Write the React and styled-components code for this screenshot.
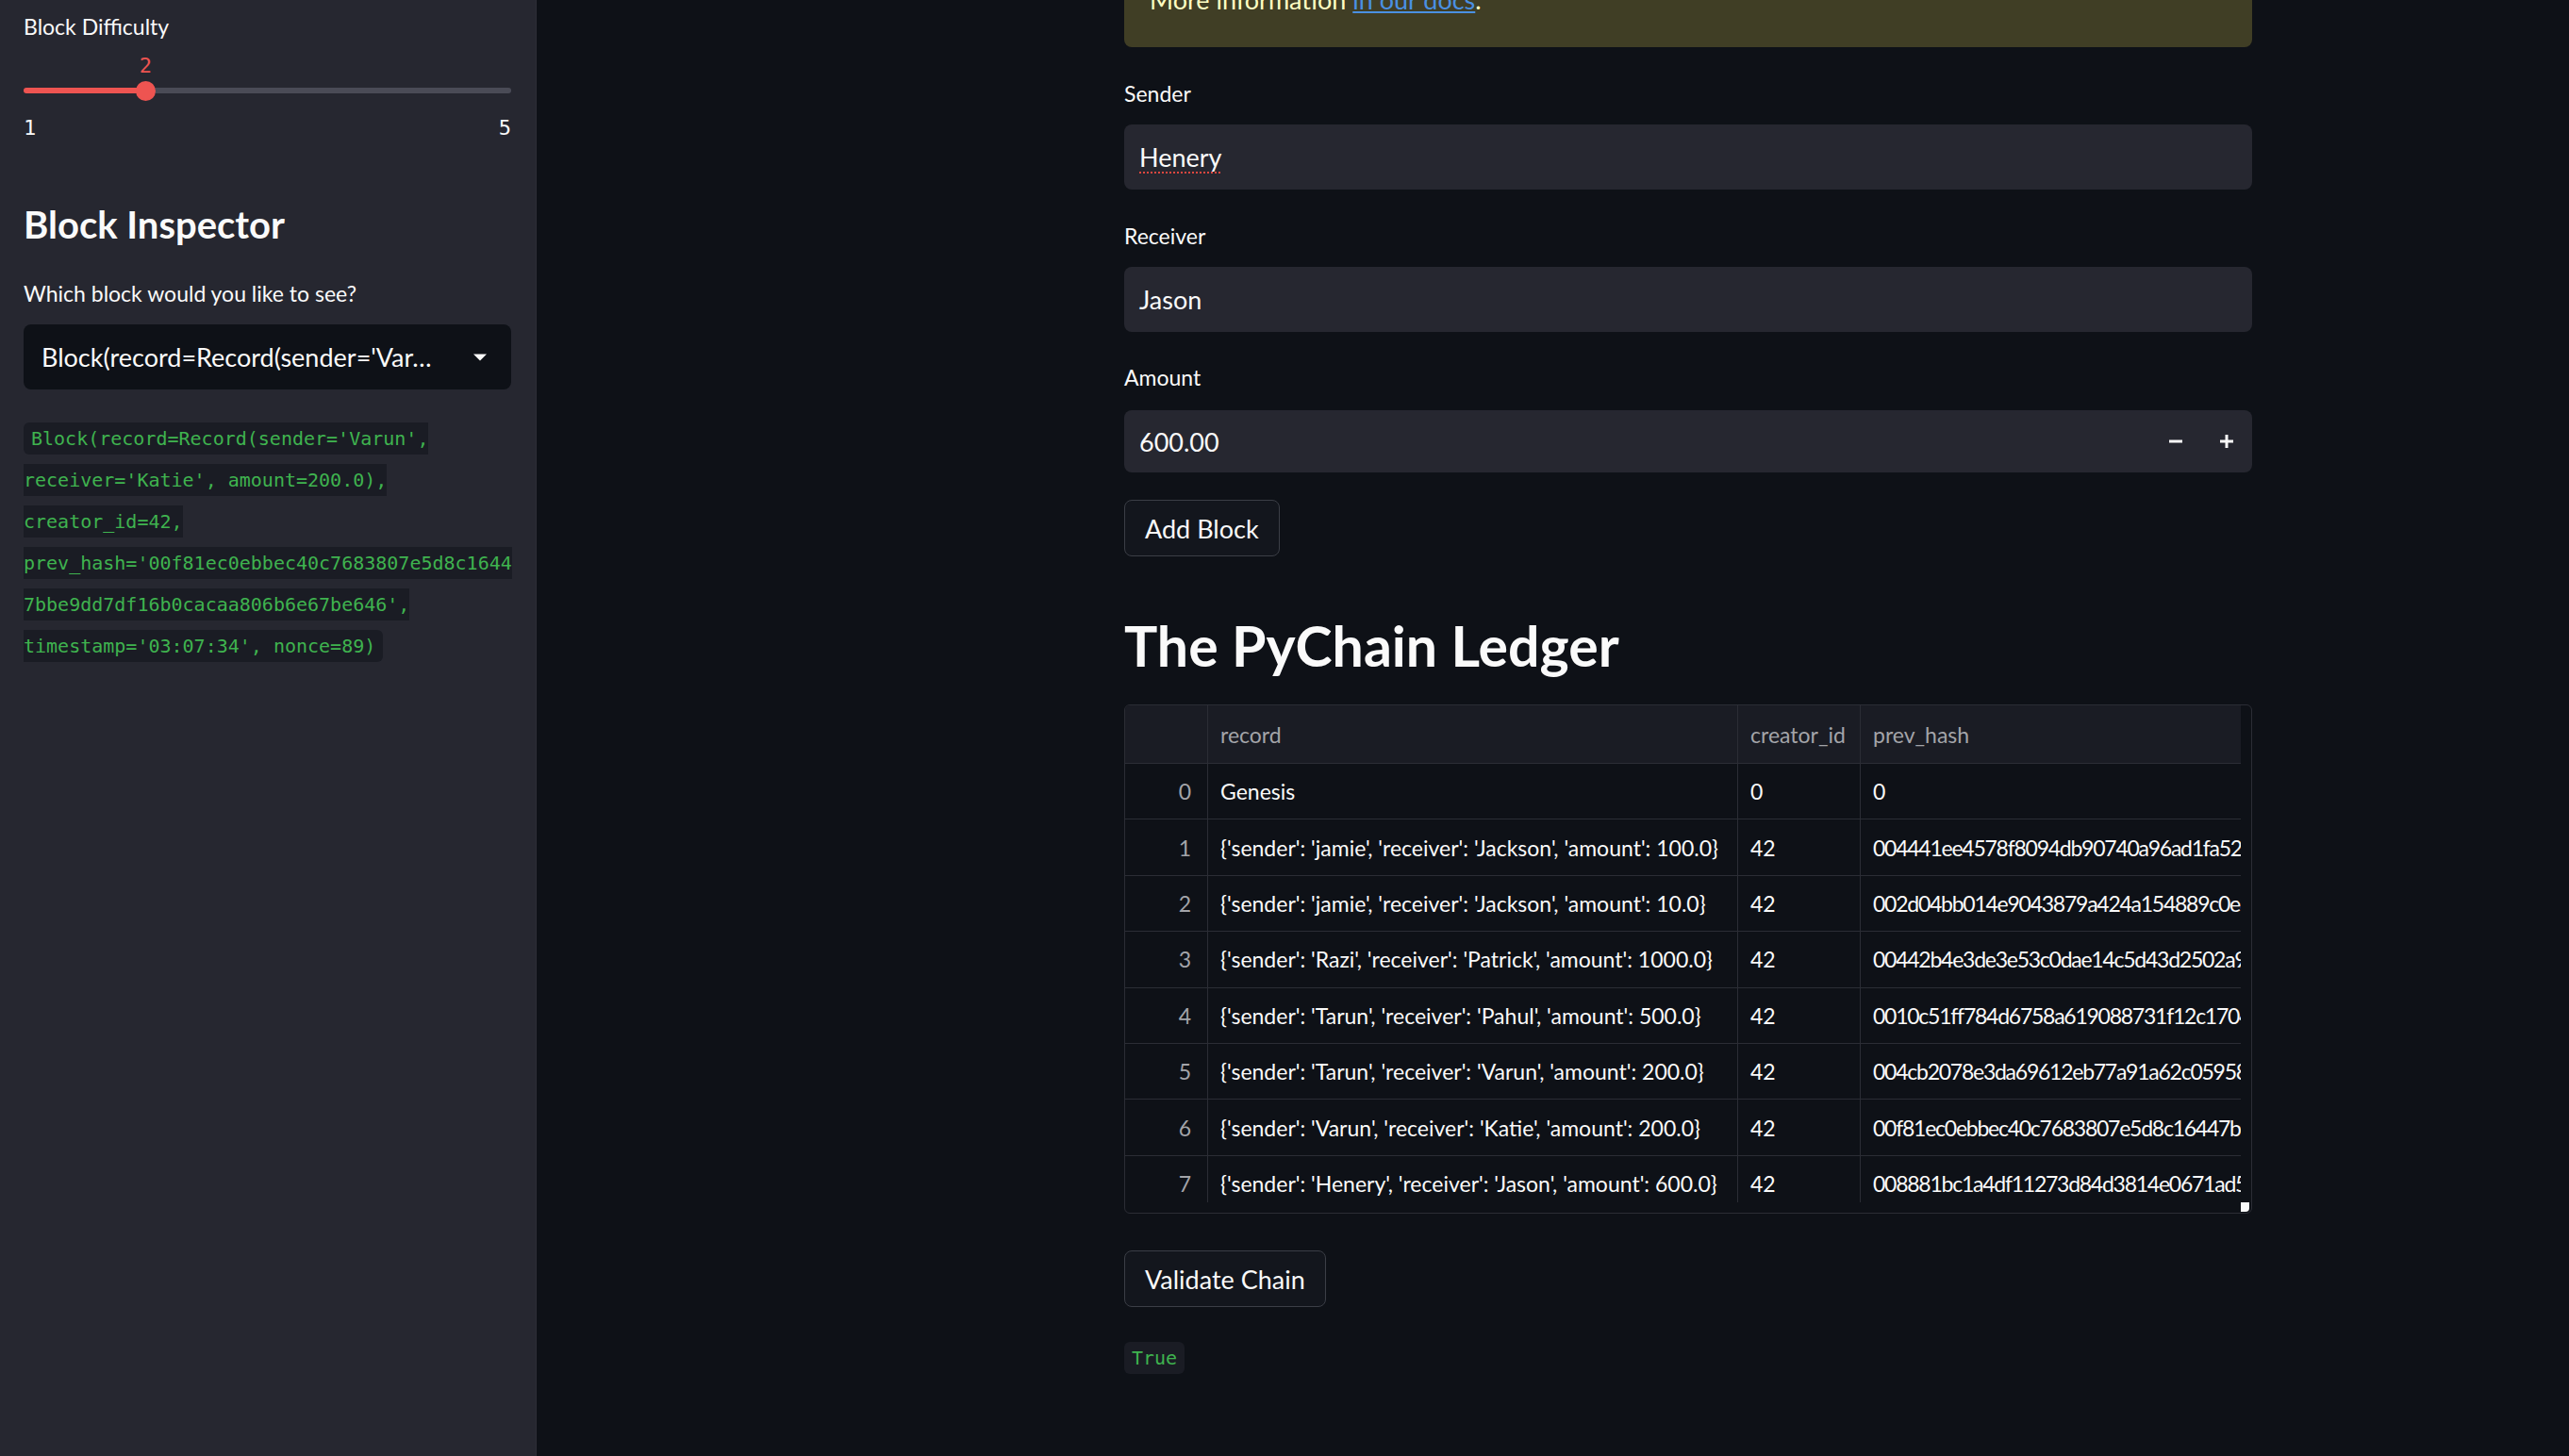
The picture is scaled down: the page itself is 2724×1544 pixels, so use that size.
import React from 'react';
import styled, { createGlobalStyle } from 'styled-components';

const GlobalStyle = createGlobalStyle`
  html, body {
    margin: 0;
    padding: 0;
    background: #0e1117;
  }
  body {
    font-family: 'Lato', 'Noto Sans', sans-serif;
    color: #fafafa;
    overflow: hidden;
  }
`;

const MONO = `'DejaVu Sans Mono', 'Liberation Mono', monospace`;

const Page = styled.div`
  display: flex;
  height: 1544px;
  overflow: hidden;
`;

// ---------- sidebar ----------
const Sidebar = styled.aside`
  width: 569px;
  flex-shrink: 0;
  box-sizing: border-box;
  background: #262730;
  border-right: 1px solid #2d2e37;
  padding: 12px 26px 0 25px;
  display: flex;
  flex-direction: column;
`;

const WidgetLabel = styled.div`
  font-size: 23px;
  line-height: 32px;
  height: 32px;
  margin-top: ${p => p.$mt || 0}px;
  color: #fafafa;
`;

const SliderBox = styled.div`
  position: relative;
  height: 60px;
  margin-top: 12px;
`;

const Track = styled.div`
  position: absolute;
  left: 0;
  right: 0;
  top: 37px;
  height: 6px;
  border-radius: 3px;
  background: linear-gradient(to right, #ee5451 0%, #ee5451 var(--fill), #4a4b56 var(--fill), #4a4b56 100%);
`;

const Thumb = styled.div`
  position: absolute;
  top: 29.5px;
  width: 21px;
  height: 21px;
  margin-left: -10.5px;
  border-radius: 50%;
  background: #ee5451;
`;

const ThumbValue = styled.div`
  position: absolute;
  top: 0;
  transform: translateX(-50%);
  font-family: ${MONO};
  font-size: 22px;
  line-height: 28px;
  color: #ee5451;
`;

const TickRow = styled.div`
  display: flex;
  justify-content: space-between;
  margin-top: 5px;
  font-family: ${MONO};
  font-size: 22px;
  line-height: 30px;
  color: #fafafa;
`;

const SideHeading = styled.h2`
  margin: 63px 0 0;
  font-size: 40px;
  line-height: 48px;
  font-weight: 700;
  color: #fafafa;
`;

const SelectBox = styled.div`
  margin-top: 17px;
  height: 69px;
  border-radius: 8px;
  background: #0e1117;
  display: flex;
  align-items: center;
  justify-content: space-between;
  padding: 0 26px 0 19px;
  font-size: 27px;
  white-space: nowrap;
`;

const CodeParagraph = styled.p`
  margin: 30px 0 0;
  font-family: ${MONO};
  font-size: 20px;
  line-height: 44px;
`;

const InlineCode = styled.code`
  font-family: ${MONO};
  font-size: 20px;
  color: #3fb34f;
  background: #1a1c24;
  padding: 5px 8px;
  border-radius: 6px;
`;

// ---------- main ----------
const Main = styled.main`
  flex: 1;
  padding-left: 623px;
`;

const Column = styled.div`
  width: 1196px;
  display: flex;
  flex-direction: column;
  align-items: flex-start;
`;

const Alert = styled.div`
  align-self: stretch;
  margin-top: -38px;
  padding: 16px 27px 28px;
  background: #403e25;
  border-radius: 8px;
  color: #ffffc2;
  font-size: 27px;
  line-height: 44px;

  a {
    color: #4a90e2;
    text-decoration: underline;
  }
`;

const FieldLabel = styled(WidgetLabel)``;

const InputBox = styled.div`
  align-self: stretch;
  margin-top: ${p => p.$mt}px;
  height: ${p => p.$h || 69}px;
  border-radius: 8px;
  background: #262730;
  display: flex;
  align-items: center;
  padding-left: 16px;
  font-size: 27px;
  color: #fafafa;
`;

const Misspelled = styled.span`
  text-decoration-line: underline;
  text-decoration-style: dotted;
  text-decoration-color: #e0473f;
  text-decoration-thickness: 2px;
  text-underline-offset: 5px;
`;

const NumberValue = styled.div`
  flex: 1;
`;

const StepButton = styled.div`
  width: 54px;
  height: 100%;
  display: flex;
  align-items: center;
  justify-content: center;
`;

const Button = styled.button`
  margin-top: ${p => p.$mt}px;
  height: 60px;
  padding: 0 21px;
  border: 1px solid #3b3e46;
  border-radius: 8px;
  background: #13161d;
  color: #fafafa;
  font-family: 'Lato', 'Noto Sans', sans-serif;
  font-size: 27px;
`;

const Title = styled.h1`
  margin: 59px 0 0;
  font-size: 59px;
  line-height: 72px;
  font-weight: 700;
  color: #fafafa;
`;

const TableFrame = styled.div`
  align-self: stretch;
  margin-top: 26px;
  height: 540px;
  box-sizing: border-box;
  border: 1px solid #2b2d35;
  border-radius: 6px;
  overflow: hidden;
  display: grid;
  grid-template-columns: 1fr 11px;
  grid-template-rows: 1fr 11px;
`;

const Viewport = styled.div`
  overflow: hidden;
`;

const Grid = styled.div`
  display: grid;
  grid-template-columns: 87px 562px 130px 404px;
`;

const Cell = styled.div`
  height: ${p => (p.$head ? '62px' : '59.4px')};
  box-sizing: border-box;
  border-bottom: 1px solid #2b2d35;
  border-left: ${p => (p.$index ? 'none' : '1px solid #2b2d35')};
  background: ${p => (p.$head ? '#1a1c24' : 'transparent')};
  color: ${p => (p.$head || p.$index ? '#a3a4a9' : '#fafafa')};
  padding: ${p => (p.$index ? '0 17px 0 0' : '0 0 0 13px')};
  display: flex;
  align-items: center;
  justify-content: ${p => (p.$index ? 'flex-end' : 'flex-start')};
  white-space: nowrap;
  overflow: hidden;
  font-size: 23px;
  letter-spacing: ${p => (p.$hash ? '-1.25px' : 'normal')};
`;

const Corner = styled.div`
  grid-column: 2;
  grid-row: 2;
`;

const CornerHandle = styled.div`
  width: 9px;
  height: 10px;
  background: #fafafa;
  border-bottom-right-radius: 4px;
`;

const ResultParagraph = styled(CodeParagraph)`
  margin-top: 32px;
`;

const rows = [
  ['Genesis', '0', '0'],
  ["{'sender': 'jamie', 'receiver': 'Jackson', 'amount': 100.0}", '42', '004441ee4578f8094db90740a96ad1fa52c7e3b91d0f6a2e85c4b7d9103e6f2a'],
  ["{'sender': 'jamie', 'receiver': 'Jackson', 'amount': 10.0}", '42', '002d04bb014e9043879a424a154889c0e8d71f3a6b2c9e5d40a17b38f2c6e91d'],
  ["{'sender': 'Razi', 'receiver': 'Patrick', 'amount': 1000.0}", '42', '00442b4e3de3e53c0dae14c5d43d2502a91c6f7e08b3d25a4e6f19c7b0d83e52'],
  ["{'sender': 'Tarun', 'receiver': 'Pahul', 'amount': 500.0}", '42', '0010c51ff784d6758a619088731f12c1704b9e2d36a5f8c01e7d4b2a93f6c58e'],
  ["{'sender': 'Tarun', 'receiver': 'Varun', 'amount': 200.0}", '42', '004cb2078e3da69612eb77a91a62c05958f3e1b7d4c02a6e9b5f18d3c7a40e26'],
  ["{'sender': 'Varun', 'receiver': 'Katie', 'amount': 200.0}", '42', '00f81ec0ebbec40c7683807e5d8c16447bbe9dd7df16b0cacaa806b6e67be646'],
  ["{'sender': 'Henery', 'receiver': 'Jason', 'amount': 600.0}", '42', '008881bc1a4df11273d84d3814e0671ad5c92e7f4b1a3d860e9c2f57b4a1d3e8'],
];

const codeLines = [
  "Block(record=Record(sender='Varun',",
  "receiver='Katie', amount=200.0),",
  'creator_id=42,',
  "prev_hash='00f81ec0ebbec40c7683807e5d8c1644",
  "7bbe9dd7df16b0cacaa806b6e67be646',",
  "timestamp='03:07:34', nonce=89)",
];

function Slider({ min, max, value }) {
  const pct = ((value - min) / (max - min)) * 100;
  return (
    <>
      <SliderBox>
        <ThumbValue style={{ left: `${pct}%` }}>{value}</ThumbValue>
        <Track style={{ '--fill': `${pct}%` }} />
        <Thumb style={{ left: `${pct}%` }} />
      </SliderBox>
      <TickRow>
        <span>{min}</span>
        <span>{max}</span>
      </TickRow>
    </>
  );
}

export default function App() {
  return (
    <Page>
      <GlobalStyle />
      <Sidebar>
        <WidgetLabel>Block Difficulty</WidgetLabel>
        <Slider min={1} max={5} value={2} />
        <SideHeading>Block Inspector</SideHeading>
        <WidgetLabel $mt={33}>Which block would you like to see?</WidgetLabel>
        <SelectBox>
          <span>Block(record=Record(sender='Var…</span>
          <svg width="14" height="8" viewBox="0 0 14 8">
            <path d="M0 0.5h14L7 7.5z" fill="#fafafa" />
          </svg>
        </SelectBox>
        <CodeParagraph>
          <InlineCode>
            {codeLines.map((line, i) => (
              <React.Fragment key={i}>
                {line}
                {i < codeLines.length - 1 && <br />}
              </React.Fragment>
            ))}
          </InlineCode>
        </CodeParagraph>
      </Sidebar>

      <Main>
        <Column>
          <Alert>
            More information <a href="#docs">in our docs</a>.
          </Alert>

          <FieldLabel $mt={33}>Sender</FieldLabel>
          <InputBox $mt={17}>
            <Misspelled>Henery</Misspelled>
          </InputBox>

          <FieldLabel $mt={33}>Receiver</FieldLabel>
          <InputBox $mt={17}>Jason</InputBox>

          <FieldLabel $mt={32}>Amount</FieldLabel>
          <InputBox $mt={19} $h={66}>
            <NumberValue>600.00</NumberValue>
            <StepButton>
              <svg width="14" height="14" viewBox="0 0 14 14">
                <rect x="0" y="5.5" width="14" height="3" fill="#fafafa" />
              </svg>
            </StepButton>
            <StepButton>
              <svg width="14" height="14" viewBox="0 0 14 14">
                <rect x="0" y="5.5" width="14" height="3" fill="#fafafa" />
                <rect x="5.5" y="0" width="3" height="14" fill="#fafafa" />
              </svg>
            </StepButton>
          </InputBox>

          <Button $mt={29}>Add Block</Button>

          <Title>The PyChain Ledger</Title>

          <TableFrame>
            <Viewport>
              <Grid>
                <Cell $head $index />
                <Cell $head>record</Cell>
                <Cell $head>creator_id</Cell>
                <Cell $head>prev_hash</Cell>
                {rows.map((r, i) => (
                  <React.Fragment key={i}>
                    <Cell $index>{i}</Cell>
                    <Cell>{r[0]}</Cell>
                    <Cell>{r[1]}</Cell>
                    <Cell $hash={i > 0}>{r[2]}</Cell>
                  </React.Fragment>
                ))}
              </Grid>
            </Viewport>
            <Corner>
              <CornerHandle />
            </Corner>
          </TableFrame>

          <Button $mt={39}>Validate Chain</Button>

          <ResultParagraph>
            <InlineCode>True</InlineCode>
          </ResultParagraph>
        </Column>
      </Main>
    </Page>
  );
}
